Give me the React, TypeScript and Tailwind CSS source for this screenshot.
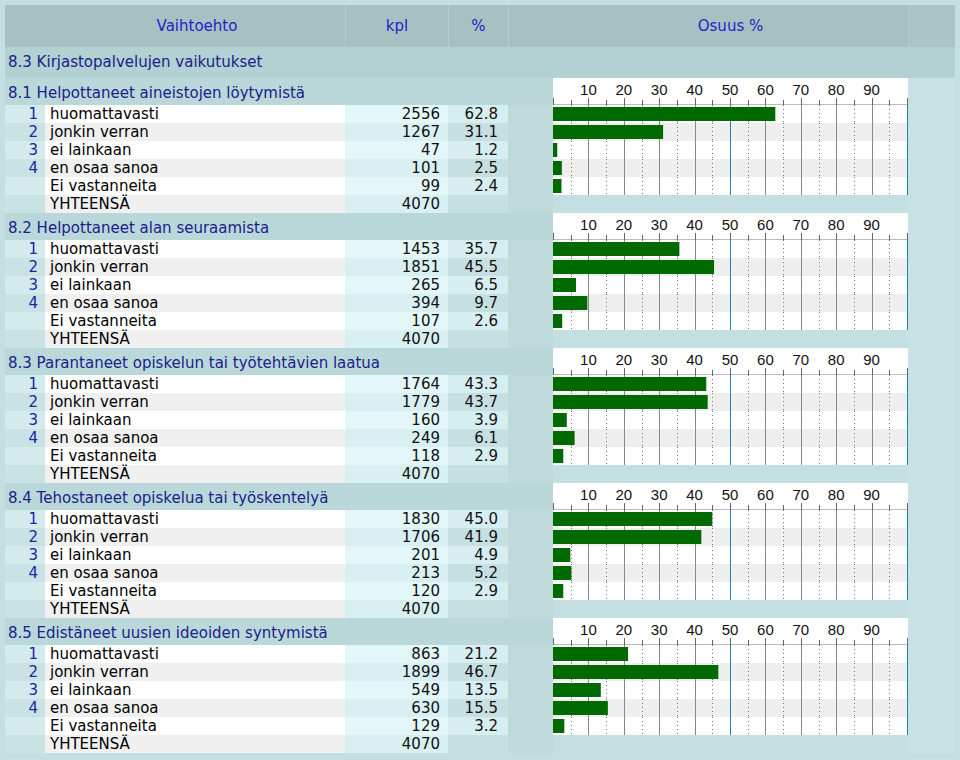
import React from "react";

const S = 3.54;
const sections = [
  { t: "8.1 Helpottaneet aineistojen löytymistä", k: [2556, 1267, 47, 101, 99], p: [62.8, 31.1, 1.2, 2.5, 2.4] },
  { t: "8.2 Helpottaneet alan seuraamista", k: [1453, 1851, 265, 394, 107], p: [35.7, 45.5, 6.5, 9.7, 2.6] },
  { t: "8.3 Parantaneet opiskelun tai työtehtävien laatua", k: [1764, 1779, 160, 249, 118], p: [43.3, 43.7, 3.9, 6.1, 2.9] },
  { t: "8.4 Tehostaneet opiskelua tai työskentelyä", k: [1830, 1706, 201, 213, 120], p: [45.0, 41.9, 4.9, 5.2, 2.9] },
  { t: "8.5 Edistäneet uusien ideoiden syntymistä", k: [863, 1899, 549, 630, 129], p: [21.2, 46.7, 13.5, 15.5, 3.2] },
];
const labels = ["huomattavasti", "jonkin verran", "ei lainkaan", "en osaa sanoa", "Ei vastanneita"];
const nums = ["1", "2", "3", "4", ""];

function Grid({ h }: { h: number }) {
  const lines = [];
  for (let i = 1; i <= 19; i++) {
    const x = Math.round(i * 5 * S) + 0.5;
    if (i % 2 === 1) lines.push(<line key={i} x1={x} x2={x} y1={0} y2={h} stroke="#777" strokeWidth={1} strokeDasharray="1 3" />);
    else lines.push(<line key={i} x1={x} x2={x} y1={0} y2={h} stroke={i === 10 ? "#2a7fa8" : "#888"} strokeWidth={1} />);
  }
  lines.push(<line key="e" x1={354.5} x2={354.5} y1={0} y2={h} stroke="#2a7fa8" strokeWidth={1} />);
  return <>{lines}</>;
}

function Axis() {
  return (
    <svg width={355} height={27} className="block bg-white">
      {[10, 20, 30, 40, 50, 60, 70, 80, 90].map((v) => (
        <text key={v} x={v * S} y={17} fontSize={15} textAnchor="middle" fill="#111" fontFamily="'Liberation Sans Narrow','Liberation Sans',sans-serif">{v}</text>
      ))}
      <line x1={0} x2={355} y1={26.5} y2={26.5} stroke="#bbb" />
      {Array.from({ length: 21 }).map((_, i) => (
        <line key={i} x1={Math.round(i * 5 * S) + 0.5} x2={Math.round(i * 5 * S) + 0.5} y1={i % 2 ? 22 : 20} y2={27} stroke="#666" />
      ))}
    </svg>
  );
}

function Bar({ p, alt }: { p: number; alt: boolean }) {
  return (
    <svg width={355} height={18} className="block" style={{ background: alt ? "#eeeeee" : "#ffffff" }}>
      <Grid h={18} />
      <rect x={0} y={2} width={Math.max(3, p * S)} height={14} fill="#006a00" />
    </svg>
  );
}

export default function App() {
  return (
    <div className="w-[960px] h-[760px] bg-[#c3dfe1] pt-[5px] pl-[5px] text-[15px] leading-none" style={{ fontFamily: "'DejaVu Sans', Verdana, sans-serif" }}>
      <div className="flex h-[42px] w-[950px] bg-[#a7c1c3] text-[#2323c8] items-center">
        <div className="w-[340px] h-full flex items-center justify-center pl-[44px]">Vaihtoehto</div>
        <div className="w-[103px] border-l border-[#b5cdcf] h-full flex items-center justify-center">kpl</div>
        <div className="w-[60px] border-l border-[#b5cdcf] h-full flex items-center justify-center">%</div>
        <div className="w-[45px] border-l border-[#b5cdcf] h-full"></div>
        <div className="w-[355px] h-full flex items-center justify-center">Osuus %</div>
        <div className="flex-1 h-full border-l border-[#b5cdcf] bg-[#aac5c7]"></div>
      </div>
      <div className="flex h-[31px] bg-[#b3d0d2] items-center text-[#20208a] pl-[3px] w-[950px]">8.3 Kirjastopalvelujen vaikutukset</div>
      {sections.map((s, si) => (
        <div key={si}>
          <div className="flex h-[27px] w-[950px]">
            <div className="w-[548px] bg-[#bad8da] flex items-center pl-[3px] text-[#20208a] pt-[3px]">{s.t}</div>
            <Axis />
            <div className="flex-1 bg-[#c7e2e4]"></div>
          </div>
          {[0, 1, 2, 3, 4, 5].map((r) => {
            const alt = r % 2 === 1;
            return (
              <div key={r} className="flex h-[18px] w-[950px] items-center">
                <div className={`w-[40px] h-full text-right pr-[7px] text-[#2222aa] flex items-center justify-end ${alt ? "bg-[#c9e3e5]" : "bg-[#d3ebed]"}`}>{r < 5 ? nums[r] : ""}</div>
                <div className={`w-[300px] h-full pl-[5px] flex items-center text-black ${alt ? "bg-[#f0f0f0]" : "bg-white"}`}>{r < 5 ? labels[r] : "YHTEENSÄ"}</div>
                <div className={`w-[103px] h-full pr-[8px] flex items-center justify-end text-[#111] ${alt ? "bg-[#d8f0f2]" : "bg-[#e3f6f8]"}`}>{r < 5 ? s.k[r] : 4070}</div>
                <div className={`w-[60px] h-full pr-[10px] flex items-center justify-end text-[#111] ${alt ? "bg-[#c6e0e2]" : "bg-[#d6eef0]"}`}>{r < 5 ? s.p[r].toFixed(1) : ""}</div>
                <div className="w-[45px] h-full bg-[#c0dadc]"></div>
                {r < 5 ? <Bar p={s.p[r]} alt={alt} /> : <div className="w-[355px] h-full bg-[#c3dfe1]"></div>}
                <div className="flex-1 h-full bg-[#c7e2e4]"></div>
              </div>
            );
          })}
        </div>
      ))}
    </div>
  );
}
